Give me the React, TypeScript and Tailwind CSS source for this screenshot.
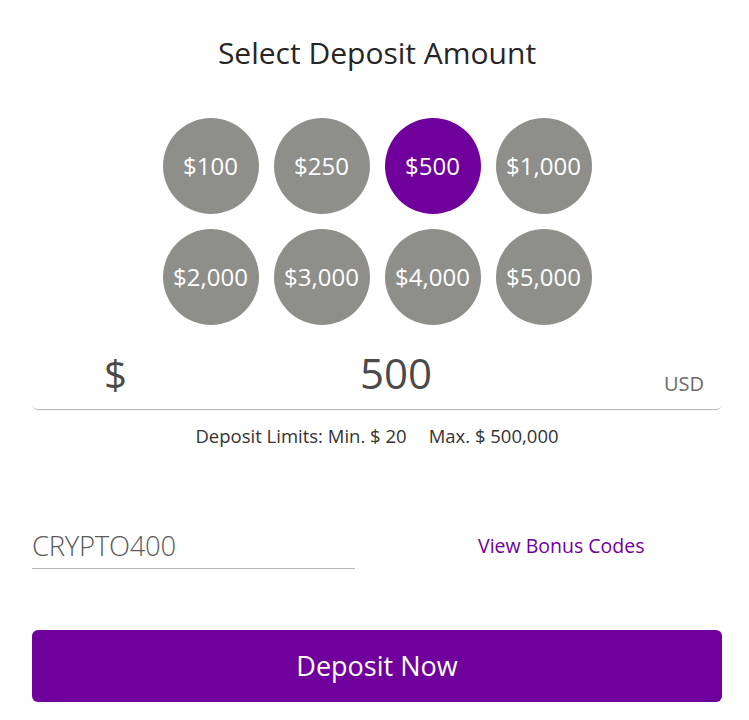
import React from "react";

const amounts = ["$100", "$250", "$500", "$1,000", "$2,000", "$3,000", "$4,000", "$5,000"];

export default function App() {
  return (
    <div className="w-[749px] h-[720px] bg-white overflow-hidden" style={{ fontFamily: '"Open Sans", sans-serif' }}>
      <div className="ml-[32px] w-[690px] flex flex-col">
        <h1 className="mt-[34px] h-[38px] text-center text-[30px] leading-[38px] text-[#262626] font-normal">
          Select Deposit Amount
        </h1>
        <div className="mt-[46px] mx-auto grid grid-cols-4 gap-x-[15px] gap-y-[15px] w-[429px]">
          {amounts.map((a) => (
            <div
              key={a}
              className={`w-[96px] h-[96px] rounded-full flex items-center justify-center text-white text-[24px] ${
                a === "$500" ? "bg-[#70009b]" : "bg-[#8e8e8b]"
              }`}
            >
              {a}
            </div>
          ))}
        </div>
        <div className="mt-[20px] h-[64px] rounded-[6px] shadow-[0_2px_1px_-1px_rgba(0,0,0,0.3)] flex items-center relative">
          <span className="absolute left-[72px] top-[4px] text-[40px] leading-[50px] text-[#4a4a4a]">$</span>
          <span className="w-full text-center text-[42px] leading-[50px] text-[#4a4a4a] -mt-[8px] pl-[38px]">500</span>
          <span className="absolute right-[18px] top-[26px] text-[20px] leading-[26px] text-[#6b6b6b]">USD</span>
        </div>
        <div className="mt-[16px] text-center text-[18.5px] leading-[22px] text-[#333]">
          Deposit Limits: Min. $ 20<span className="inline-block w-[22px]"></span>Max. $ 500,000
        </div>
        <div className="mt-[80px] flex items-start">
          <div className="w-[323px] border-b border-[#b5b5b5] h-[42px] flex items-end pb-[5px]">
            <span className="text-[27.5px] leading-[34px] font-light text-[#5a5a5a] tracking-[-0.3px]">CRYPTO400</span>
          </div>
          <div className="flex-1 pl-[123px] pt-[6px] text-[19.5px] leading-[26px] text-[#70009b]">View Bonus Codes</div>
        </div>
        <button className="mt-[61px] h-[72px] w-full rounded-[6px] bg-[#70009b] text-white text-[27px] leading-[36px]">
          Deposit Now
        </button>
      </div>
    </div>
  );
}
